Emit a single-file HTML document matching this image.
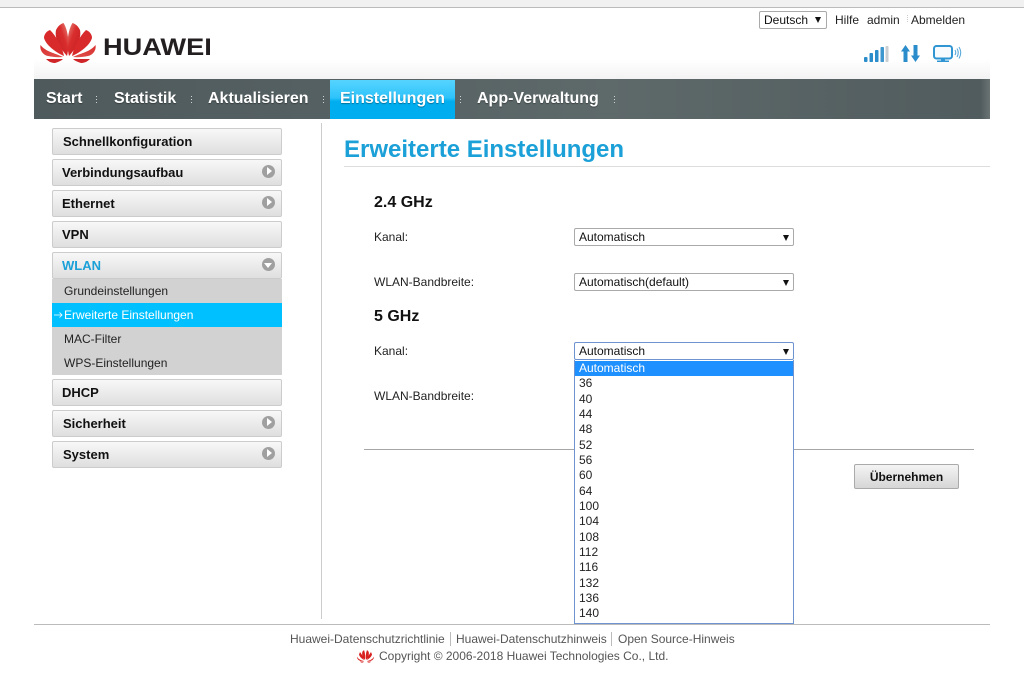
<!DOCTYPE html>
<html><head><meta charset="utf-8"><title>Huawei</title>
<style>
html,body{margin:0;padding:0;background:#fff;}
body{width:1024px;height:689px;position:relative;overflow:hidden;font-family:"Liberation Sans",Arial,sans-serif;font-size:12px;color:#222;}
.a{position:absolute;white-space:nowrap;}
.nav{position:absolute;top:79px;height:40px;line-height:39px;font-size:16px;font-weight:bold;color:#fff;white-space:nowrap;text-shadow:0 1px 1px rgba(0,0,0,.35);}
.dots{position:absolute;top:96px;width:1px;height:8px;background:repeating-linear-gradient(#cfd4d4 0 1px,transparent 1px 3px);}
.m{position:absolute;left:52px;width:228px;height:25px;border:1px solid #ccc;border-radius:2px;background:linear-gradient(#f8f8f8,#dfdfdf);font-size:13px;font-weight:bold;line-height:25px;color:#111;}
.m span{position:absolute;top:0;white-space:nowrap;}
.ic{position:absolute;left:209px;top:5px;width:13px;height:13px;border-radius:50%;background:#a0a0a0;}
.ic:after{content:"";position:absolute;left:5px;top:2px;border-left:5px solid #fff;border-top:4.5px solid transparent;border-bottom:4.5px solid transparent;}
.ic.d:after{left:2px;top:5px;border-top:5px solid #fff;border-left:4.5px solid transparent;border-right:4.5px solid transparent;border-bottom:0;}
.s{position:absolute;left:52px;width:230px;height:24px;background:#d2d2d2;line-height:24px;color:#222;}
.s span{position:absolute;left:12px;white-space:nowrap;}
.sel{position:absolute;left:574px;width:218px;height:16px;border:1px solid #aaa;border-radius:2px;line-height:16px;background:#fff;color:#111;}
.sel span{position:absolute;left:4px;}
.sel i{position:absolute;right:4px;top:6px;border-top:6px solid #111;border-left:3px solid transparent;border-right:3px solid transparent;}
.h{position:absolute;left:374px;font-size:16px;font-weight:bold;color:#111;white-space:nowrap;}
.l{position:absolute;left:374px;color:#222;white-space:nowrap;}
.o{height:15.33px;line-height:15.33px;padding-left:4px;color:#222;}
</style></head>
<body>
<div class="a" style="left:0;top:0;width:1024px;height:7px;background:#f1f1f1;border-bottom:1px solid #bbb;"></div>
<div class="a" style="left:34px;top:30px;width:956px;height:49px;background:linear-gradient(#fff 0,#fff 60%,#f3f3f3 100%);"></div>

<div class="a" style="left:759px;top:11px;width:66px;height:16px;border:1px solid #aaa;border-radius:2px;line-height:16px;color:#111;"><span style="position:absolute;left:4px;">Deutsch</span><i style="position:absolute;left:55px;top:5px;border-top:6px solid #111;border-left:3px solid transparent;border-right:3px solid transparent;"></i></div>
<span class="a" style="left:835px;top:13px;">Hilfe</span>
<span class="a" style="left:867px;top:13px;">admin</span>
<div class="dots" style="left:907px;top:15px;background:repeating-linear-gradient(#ccc 0 1px,transparent 1px 2px);"></div>
<span class="a" style="left:911px;top:13px;">Abmelden</span>

<svg class="a" style="left:36px;top:18px;" width="64" height="50" viewBox="36 18 64 50">
<defs><linearGradient id="g" x1="1" y1="0" x2="0" y2="1"><stop offset="0" stop-color="#e88d80"/><stop offset=".4" stop-color="#d92d2d"/><stop offset="1" stop-color="#c41c21"/></linearGradient>
<linearGradient id="g2" x1="0" y1="0" x2="1" y2="1"><stop offset="0" stop-color="#d8302f"/><stop offset="1" stop-color="#e0524d"/></linearGradient>
<g id="p">
<path d="M67 56C58 46 54.500 37 56 30C58 26 60.500 24 63.500 23C68 30 70 44 67 56Z" fill="url(#g)"/>
<path d="M64 56C55 52 46 45 44 38C44 34 47 31 50 30C56 36 62 46 64 56Z" fill="#d8292b"/>
<path d="M63 57C55 53 46 52 40.500 45C39.500 50 43 55 48 56C53 57 58 57.500 63 57Z" fill="url(#g2)"/>
<path d="M63 59L46 59C49 62 52 63 55 63C58 62 61 61 63 59Z" fill="#cf2528"/>
</g></defs>
<use href="#p"/>
<use href="#p" transform="matrix(-1 0 0 1 136 0)"/>
</svg>
<span class="a" style="left:103px;top:33px;font-size:24.5px;line-height:30px;font-weight:bold;color:#231f20;transform:scaleX(1.11);transform-origin:0 50%;">HUAWEI</span>

<svg class="a" style="left:860px;top:42px;" width="106" height="24" viewBox="0 0 106 24">
<rect x="4" y="15" width="3.500" height="5" rx="1" fill="#2a8ccb"/>
<rect x="9.500" y="11" width="3.500" height="9" rx=".8" fill="#2a8ccb"/>
<rect x="15" y="8" width="3.500" height="12" rx=".8" fill="#2a8ccb"/>
<rect x="20.500" y="5" width="3.500" height="15" rx=".8" fill="#3f97d0"/>
<rect x="25.500" y="4" width="3" height="16" rx=".8" fill="#c8ced2"/>
<path d="M45.500 3L50 9.500H47.500V20H43.500V9.500H41Z" fill="#2a8ccb"/>
<path d="M55.500 20L60 13.500H57.500V3H53.500V13.500H51Z" fill="#2a8ccb"/>
<rect x="74" y="4" width="18" height="12.500" rx="2.500" fill="#f8fbfd" stroke="#2f95d3" stroke-width="2"/>
<rect x="81" y="17" width="4" height="2" fill="#2f95d3"/>
<rect x="77" y="18.500" width="12" height="1.500" fill="#2f95d3"/>
<path d="M95 8Q96.500 10.500 95 13M97 6.500Q99.500 10.500 97 15M99 5Q102.500 10.500 99 16.500" fill="none" stroke="#59a9dc" stroke-width="1.100"/>
</svg>

<div class="a" style="left:34px;top:79px;width:956px;height:40px;background:linear-gradient(90deg,#4f5a5c,#566163 35%,#5e696a 60%,#515c5e 99%,#6a7374);"></div>
<div class="a" style="left:330px;top:80px;width:125px;height:39px;background:linear-gradient(#56d4ff,#2fc3fb 45%,#00aeef 55%,#00aeef);"></div>
<span class="nav" style="left:46px;">Start</span>
<span class="nav" style="left:114px;">Statistik</span>
<span class="nav" style="left:208px;">Aktualisieren</span>
<span class="nav" style="left:340px;">Einstellungen</span>
<span class="nav" style="left:477px;">App-Verwaltung</span>
<div class="dots" style="left:96px;"></div>
<div class="dots" style="left:191px;"></div>
<div class="dots" style="left:323px;"></div>
<div class="dots" style="left:460px;"></div>
<div class="dots" style="left:614px;"></div>

<div class="m" style="top:128px;"><span style="left:10px;">Schnellkonfiguration</span></div>
<div class="m" style="top:159px;"><span style="left:9px;">Verbindungsaufbau</span><div class="ic"></div></div>
<div class="m" style="top:190px;"><span style="left:9px;">Ethernet</span><div class="ic"></div></div>
<div class="m" style="top:221px;"><span style="left:9px;">VPN</span></div>
<div class="m" style="top:252px;height:25px;"><span style="left:9px;color:#1ba0d8;">WLAN</span><div class="ic d"></div></div>
<div class="s" style="top:279px;"><span>Grundeinstellungen</span></div>
<div class="s" style="top:303px;background:#00c0ff;color:#fff;"><span>Erweiterte Einstellungen</span><svg style="position:absolute;left:2px;top:8px;" width="10" height="8" viewBox="0 0 10 8"><path d="M0 4H8M5.500 1.500L8 4L5.500 6.500" fill="none" stroke="#fff" stroke-width=".8"/></svg></div>
<div class="s" style="top:327px;"><span>MAC-Filter</span></div>
<div class="s" style="top:351px;"><span>WPS-Einstellungen</span></div>
<div class="m" style="top:379px;"><span style="left:9px;">DHCP</span></div>
<div class="m" style="top:410px;"><span style="left:10px;">Sicherheit</span><div class="ic"></div></div>
<div class="m" style="top:441px;"><span style="left:10px;">System</span><div class="ic"></div></div>

<div class="a" style="left:321px;top:123px;width:1px;height:496px;background:#ccc;"></div>

<span class="a" style="left:344px;top:136px;font-size:24px;line-height:28px;font-weight:bold;color:#1ba0d8;">Erweiterte Einstellungen</span>
<div class="a" style="left:344px;top:166px;width:646px;height:1px;background:#ddd;"></div>

<span class="h" style="top:194px;">2.4 GHz</span>
<span class="l" style="top:230px;">Kanal:</span>
<div class="sel" style="top:228px;"><span>Automatisch</span><i></i></div>
<span class="l" style="top:275px;">WLAN-Bandbreite:</span>
<div class="sel" style="top:273px;"><span>Automatisch(default)</span><i></i></div>
<span class="h" style="top:308px;">5 GHz</span>
<span class="l" style="top:344px;">Kanal:</span>
<div class="sel" style="top:342px;border-color:#6f93cf;"><span>Automatisch</span><i></i></div>
<span class="l" style="top:389px;">WLAN-Bandbreite:</span>

<div class="a" style="left:364px;top:449px;width:610px;height:1px;background:#a6a6a6;"></div>
<div class="a" style="left:854px;top:464px;width:103px;height:23px;border:1px solid #aaa;border-radius:2px;background:linear-gradient(#f4f4f4,#d6d6d6);text-align:center;line-height:24px;font-weight:bold;color:#111;">Übernehmen</div>

<div class="a" style="left:574px;top:360px;width:218px;height:262px;border:1px solid #6f93cf;border-top:0;background:#fff;padding-top:1px;">
<div class="o" style="background:#1e90ff;color:#fff;">Automatisch</div>
<div class="o">36</div><div class="o">40</div><div class="o">44</div><div class="o">48</div><div class="o">52</div><div class="o">56</div><div class="o">60</div><div class="o">64</div><div class="o">100</div><div class="o">104</div><div class="o">108</div><div class="o">112</div><div class="o">116</div><div class="o">132</div><div class="o">136</div><div class="o">140</div>
</div>

<div class="a" style="left:34px;top:624px;width:956px;height:1px;background:#bbb;"></div>
<span class="a" style="left:290px;top:632px;color:#555;">Huawei-Datenschutzrichtlinie</span>
<div class="a" style="left:450px;top:632px;width:1px;height:14px;background:#bbb;"></div>
<span class="a" style="left:456px;top:632px;color:#555;">Huawei-Datenschutzhinweis</span>
<div class="a" style="left:611px;top:632px;width:1px;height:14px;background:#bbb;"></div>
<span class="a" style="left:618px;top:632px;color:#555;">Open Source-Hinweis</span>
<svg class="a" style="left:356px;top:649px;" width="19" height="14" viewBox="0 0 19 14">
<path d="M9 11C6.500 8.500 5.500 5 6.500 2.500L8 1C9.200 4 9.500 8 9 11Z M10 11C12.500 8.500 13.500 5 12.500 2.500L11 1C9.800 4 9.500 8 10 11Z M8 11C5.500 9.500 3.500 7.500 3 5.500L4 3C6 5.500 7.500 8.500 8 11Z M11 11C13.500 9.500 15.500 7.500 16 5.500L15 3C13 5.500 11.500 8.500 11 11Z M8 12C5 11.500 2 10 1 7.500C1 10.500 3 12.500 8 12Z M11 12C14 11.500 17 10 18 7.500C18 10.500 16 12.500 11 12Z M8 12.500L4 12.500C5 14 7 14 8 12.500Z M11 12.500L15 12.500C14 14 12 14 11 12.500Z" fill="#d8201f"/>
</svg>
<span class="a" style="left:379px;top:649px;color:#555;">Copyright © 2006-2018 Huawei Technologies Co., Ltd.</span>
</body></html>
